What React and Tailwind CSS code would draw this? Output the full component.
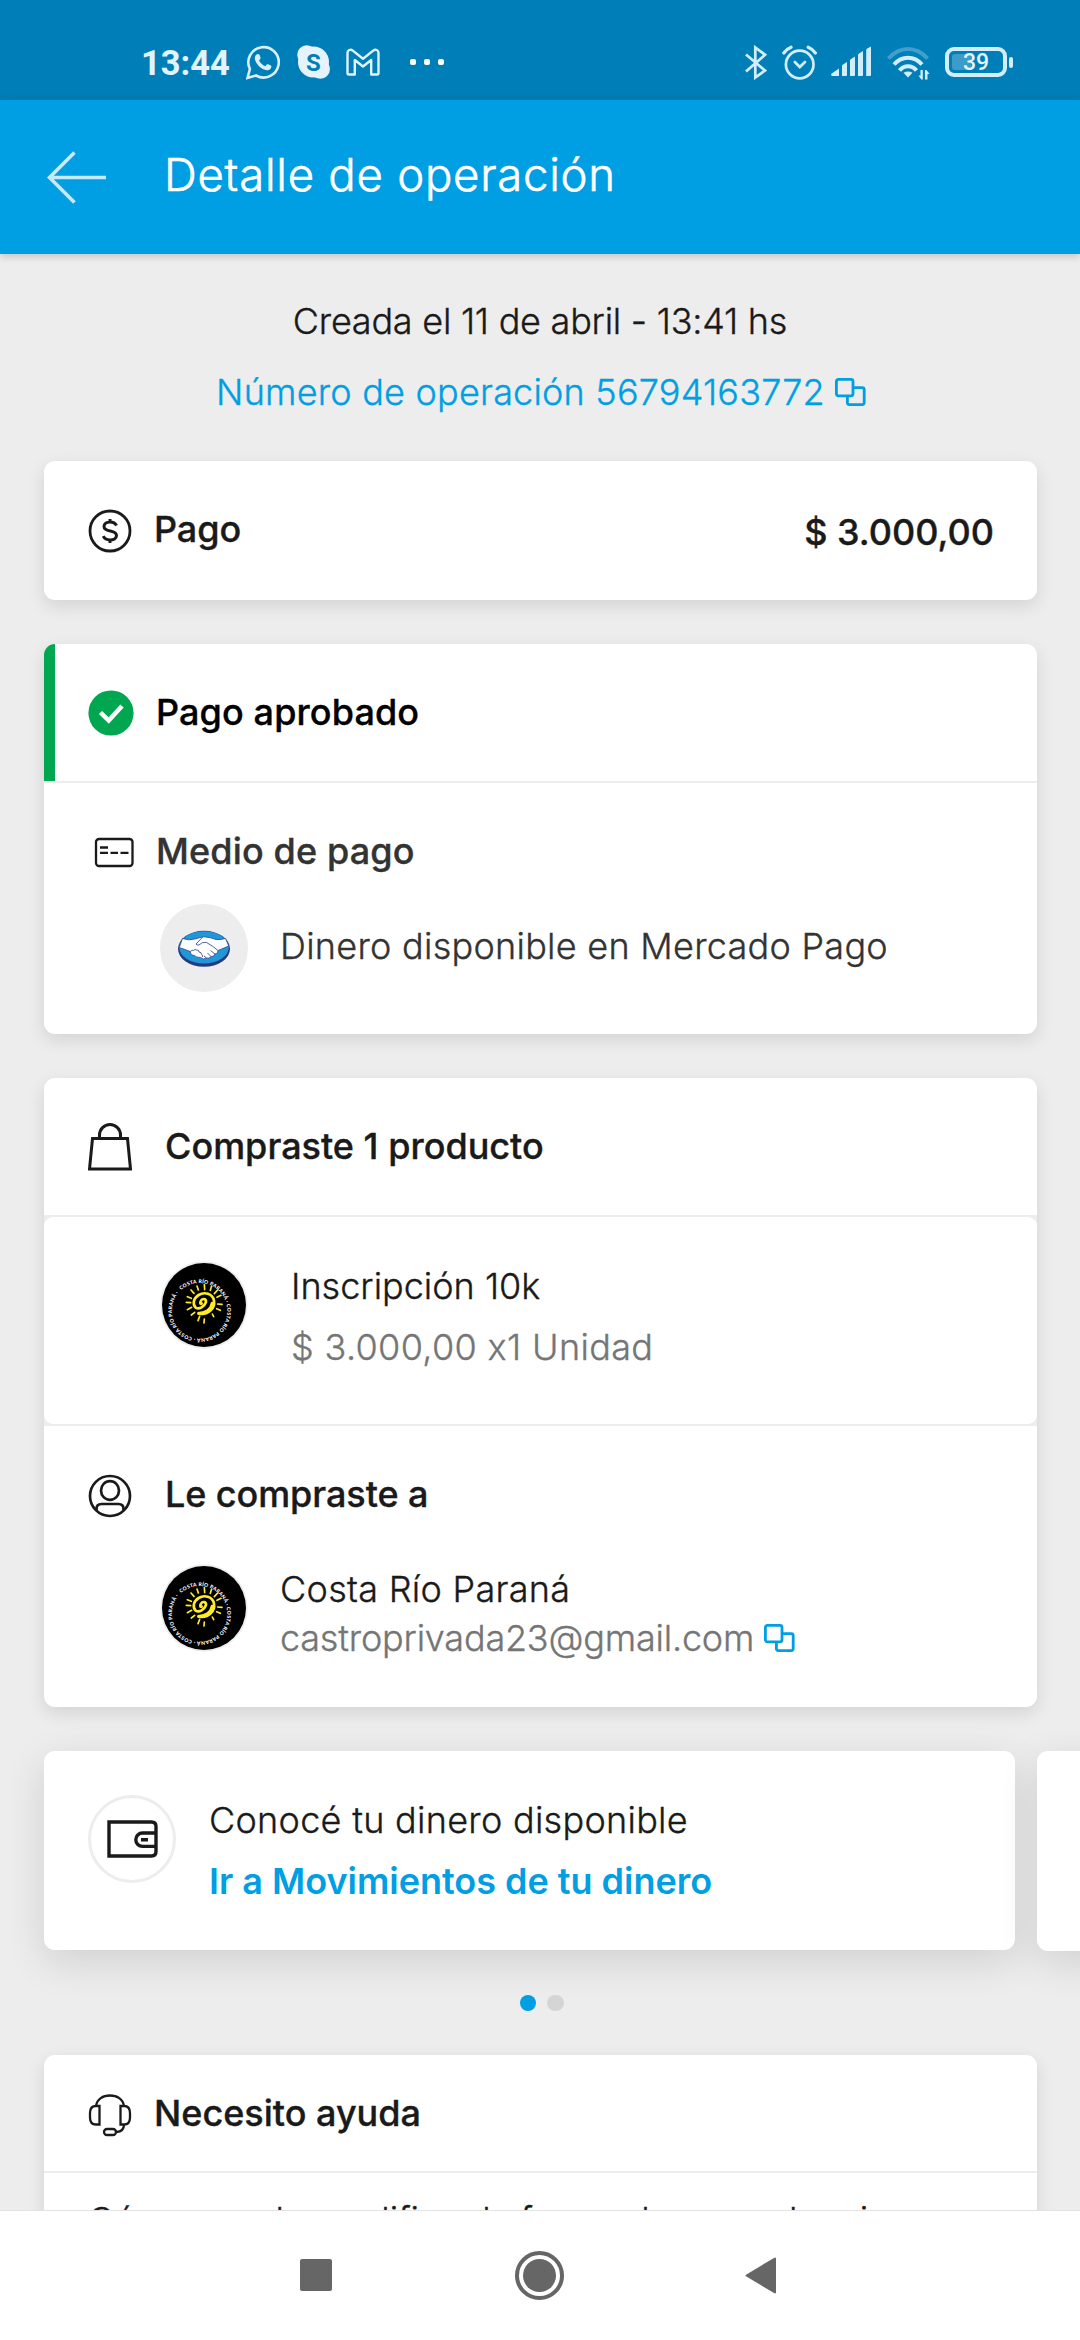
import React from "react";

const CARD = "mx-[44px] w-[993px] overflow-hidden rounded-[11px] bg-white";
const SHADOW = "shadow-[0_6px_18px_rgba(0,0,0,0.11)]";

function CopyIcon() {
  return (
    <svg className="h-7 w-[31px] shrink-0" viewBox="0 0 31 28" fill="none" stroke="#009ee3" strokeWidth="2.8" strokeLinejoin="round">
      <rect x="1.4" y="1.4" width="16.6" height="16.4" rx="2" />
      <path d="M18 9.600h9.200a2 2 0 0 1 2 2v13a2 2 0 0 1-2 2H14.400a2 2 0 0 1-2-2V17.800" />
    </svg>
  );
}

function StatusIcons() {
  const c = "#d3eefb";
  return (
    <div className="flex items-start pr-[67px] pt-[45px]">
      <svg className="h-[35px] w-[22px]" viewBox="0 0 22 35" fill="none" stroke={c} strokeWidth="2.7">
        <path d="M1 9.500L20 25.500 10.300 32.500V2.500L20 9.800 1 26.500" />
      </svg>
      <svg className="ml-[15px] h-[35px] w-[35px]" viewBox="0 0 35 35" fill="none" stroke={c} strokeWidth="2.700" strokeLinecap="round">
        <circle cx="17.700" cy="19.500" r="13.800" />
        <path d="M12.800 17l5 5 5.200-5" />
        <path d="M1.800 8Q4.500 4 9 2.200M33.400 8Q30.700 4 26.200 2.200" strokeWidth="3.200" />
      </svg>
      <svg className="ml-[14px] h-[35px] w-[41px]" viewBox="0 0 41 35" fill={c}>
        <path d="M0 29l8-5.500V31H1.500Q0 31 0 29zM11 31V21q0-1 1-1.500l4-2.500v13q0 1-1 1zM19 31V15.500q0-1 1-1.500l4-2.500V30q0 1-1 1zM27 31V10q0-1 1-1.500L32 6v24q0 1-1 1zM35.200 31V5q0-1 1-1.500L40 1.500V30q0 1-1 1z" />
      </svg>
      <svg className="ml-[15px] h-[36px] w-[43px]" viewBox="0 0 43 36" fill="none" stroke={c} strokeWidth="4">
        <path d="M1.500 13.500Q10 4 21 4t19.500 9.500" opacity=".3" />
        <path d="M7 19.500Q13 12.800 21 12.800t14 6.700" />
        <path d="M12.500 25.500Q16 21.300 21 21.300t8.500 4.200" />
        <path d="M21 32.500l-4.500-4.800Q21 25.500 25.500 27.700z" fill={c} stroke="none" />
        <path d="M33.500 25h2.300v9.500h-1.500L31.500 30.500h2zM38 25h1.500l3 4h-2v5.500H38z" fill={c} stroke="none" />
      </svg>
      <div className="ml-[15px] mt-[2px] flex items-center">
        <div className="flex h-[30px] w-[62px] rounded-[9px] border-4 border-[#d3eefb] p-[3px]">
          <div className="h-4 w-[19px] rounded-[3px] bg-[#3b9cc9]" />
          <span className="-ml-[8px] font-['Roboto'] text-[23px] font-medium leading-[18px] text-[#e3f5fd]">39</span>
        </div>
        <div className="ml-[2px] h-[11px] w-1 rounded-[2px] bg-[#d3eefb]" />
      </div>
    </div>
  );
}

function StatusBar() {
  return (
    <div className="flex h-[100px] justify-between bg-[#007eb7] [-webkit-text-stroke:0px]">
      <div className="flex items-start pl-[141px] pt-[45px]">
        <span className="mt-[-2px] w-[105px] font-['Roboto'] text-[34.5px] font-bold leading-[40px] text-[#e0f4fd]">13:44</span>
        <svg className="h-[35px] w-[34px]" viewBox="0 0 34 35" fill="none" stroke="#d9f0fb" strokeWidth="2.600">
          <path d="M1.500 33l2.400-9A15.200 15.200 0 1 1 10 30.500z" />
          <path d="M10.500 9.500c1.300-1 2.600-.7 3 .3l1 2.600c.3.800-.1 1.500-1.500 2.800 1.300 2.700 3.400 4.700 6.300 6 1.200-1.700 1.900-2.300 2.800-1.900l2.700 1.300c.9.500.7 1.800 0 2.800-1.500 2-4 2.100-6.500 1.200C14 23 10.400 19 9 14.700c-.5-2.200 0-4 1.500-5.200z" fill="#d9f0fb" stroke="none" />
        </svg>
        <svg className="ml-[17px] h-[34px] w-[33px]" viewBox="0 0 33 34" fill="#e5f4fc">
          <circle cx="16.500" cy="17" r="15.500" />
          <circle cx="9.800" cy="9.800" r="9.600" />
          <circle cx="23.300" cy="24.200" r="9.600" />
          <text x="16.500" y="25.500" textAnchor="middle" fill="#007eb7" className="font-['Roboto'] text-[24px] font-bold">S</text>
        </svg>
        <svg className="ml-[16px] mt-[3px] h-[28px] w-[34px]" viewBox="0 0 34 28" fill="none" stroke="#e0f4fd" strokeWidth="2.400" strokeLinejoin="round">
          <path d="M1.500 5C1.500 2 4.500.8 6.800 2.600L17 10.800 27.200 2.600C29.500.8 32.500 2 32.500 5V25Q32.500 26.500 31 26.500H25.200V12L17 18.500 8.800 12V26.500H3Q1.500 26.500 1.500 25z" />
        </svg>
        <div className="ml-[30px] mt-[14px] flex gap-2">
          <span className="h-[6px] w-[6px] rounded-[2px] bg-white" />
          <span className="h-[6px] w-[6px] rounded-[2px] bg-white" />
          <span className="h-[6px] w-[6px] rounded-[2px] bg-white" />
        </div>
      </div>
      <StatusIcons />
    </div>
  );
}

function SunLogo({ id }) {
  const rays = "M163 104L164 119M185 108L181 121M203 120L193 131M213 136L201 142M216 163L203 162M211 181L200 176M191 200L187 192M162 219L163 207M144 212L149 199M124 195L134 187M112 179L125 172M109 157L122 158M112 140L124 145M123 120L132 130M141 108L145 120";
  return (
    <svg className="h-[88px] w-[88px] shrink-0 [-webkit-text-stroke:0px]" viewBox="30 33 264 264">
      <circle cx="162" cy="165" r="131" fill="#ededed" />
      <circle cx="162" cy="165" r="126" fill="#000" />
      <path id={id} d="M90.100 123.500A83 83 0 1 1 90 123.600" fill="none" />
      <text fill="#fff" className="font-['Lato'] text-[15px] font-black">
        <textPath href={"#" + id} textLength="514" lengthAdjust="spacing">&#160;COSTA RÍO PARANÁ · COSTA RÍO PARANÁ · COSTA RÍO PARANÁ ·</textPath>
      </text>
      <path d={rays} stroke="#ffec27" strokeWidth="5" strokeLinecap="round" fill="none" />
      <path d="M148 191C176 196 196 173 192 152C188 129 162 125 146 135C130 145 127 163 137 173C148 180 163 170 168 156C169 146 158 144 153 152C149 159 151 163 155 160" stroke="#ffec27" strokeWidth="8" strokeLinecap="round" fill="none" />
      <path d="M146 190C165 191 184 180 187 160" stroke="#ffec27" strokeWidth="10" strokeLinecap="round" fill="none" />
    </svg>
  );
}

function Handshake() {
  return (
    <svg className="h-[37px] w-[52px]" viewBox="0 0 52 37">
      <ellipse cx="26" cy="18.800" rx="26" ry="18" fill="#273a80" />
      <ellipse cx="26" cy="17.300" rx="24.800" ry="16.100" fill="#1f97d8" />
      <path d="M4.500 8.500Q11 11 18 8.800 22 7.500 26 6.800 33 7.500 38 9.500 43 10 47.500 8.500L50.700 16 40 20.500Q40 24 37 24 36 27 33 26.500 31 29 28.500 28 25 30 22.500 27.500 18 27.500 16.500 25.500 12 25 12.500 21.500L1.300 17.500z" fill="#fff" stroke="#273a80" strokeWidth=".7" />
      <path d="M12.500 21.500q1.500-2 3-1 1.500-2 3-.500 2.500-.5 2.500 2 2.500 0 2.500 2.500 2 .5 1 2.500M40 20.500Q35 16 28.500 12.500 24 11.500 21 15 18.500 15.500 18 14L24.500 7.300M37 24l-4.500-3.500M33 26.500l-3.500-3.500M28.500 28l-2.500-2" fill="none" stroke="#273a80" strokeWidth=".8" />
    </svg>
  );
}

function SystemNav() {
  return (
    <div className="flex h-[130px] items-start border-t border-[#e3e3e3] bg-white pl-[300px]">
      <div className="mt-[48px] h-8 w-8 rounded-[2px] bg-[#666]" />
      <div className="ml-[183px] mt-[40px] flex h-[49px] w-[49px] items-center justify-center rounded-full border-4 border-[#666]">
        <div className="h-[33px] w-[33px] rounded-full bg-[#666]" />
      </div>
      <svg className="ml-[181px] mt-[46px] h-[37px] w-[32px]" viewBox="0 0 32 37" fill="#666" stroke="#666" strokeWidth="2" strokeLinejoin="round">
        <path d="M1.500 18.500L30 1.500v34z" />
      </svg>
    </div>
  );
}

export default function App() {
  return (
    <div className="flex h-[2340px] w-[1080px] flex-col overflow-hidden bg-[#ededed] font-['Inter',sans-serif] text-[36px] font-light leading-[40px] text-[#1a1a1a] [-webkit-text-stroke:0.35px] [font-feature-settings:'calt'_0]">
      <StatusBar />
      <header className="relative z-10 flex h-[154px] shrink-0 items-center bg-[#009ee3] pl-[47px] shadow-[0_2px_8px_rgba(0,0,0,0.2)]">
        <svg className="h-[53px] w-[60px]" viewBox="0 0 60 53" fill="none" stroke="#c4ebfc" strokeWidth="3.600">
          <path d="M27.500 1.500L2.500 26.500l25 25M2.500 26.500H59" />
        </svg>
        <h1 className="mb-[5px] ml-[57px] text-[45.5px] leading-[54px] tracking-[0.75px] text-white [-webkit-text-stroke:0.6px]">Detalle de operación</h1>
      </header>

      <main className="flex min-h-0 flex-1 flex-col overflow-hidden">
        <div className="flex flex-col items-center pt-[47px]">
          <p className="tracking-[-0.24px]">Creada el 11 de abril - 13:41 hs</p>
          <div className="mt-[31px] flex items-center gap-[10px] pl-[2px] text-[#009ee3]">
            <span className="tracking-[0.21px]">Número de operación 56794163772</span>
            <CopyIcon />
          </div>
        </div>

        <section className={`${CARD} ${SHADOW} mt-[49px] flex h-[139px] shrink-0 items-center justify-between pl-[44px] pr-[43px] font-medium`}>
          <div className="flex items-center">
            <svg className="h-[44px] w-[44px]" viewBox="0 0 44 44" fill="none" stroke="#1a1a1a" strokeWidth="2.800">
              <circle cx="22" cy="22" r="20" />
              <path d="M28.500 16.500C27 13.500 24.500 13 22 13c-3.500 0-6 1.800-6 4.500 0 6.500 12.500 2.500 12.500 9C28.500 29.500 25.500 31 22 31c-3 0-5.500-1.200-6.800-3.800M22 10v3.500M22 30.500V34" strokeWidth="3" />
            </svg>
            <span className="mb-1 ml-[22px] tracking-[-0.1px]">Pago</span>
          </div>
          <span className="mt-[2px]">$ 3.000,00</span>
        </section>

        <section className={`${CARD} ${SHADOW} mt-[44px] h-[390px] shrink-0 font-medium`}>
          <div className="flex h-[137px] items-center border-l-[11px] border-[#00a650] pl-[33px] text-black">
            <svg className="h-[46px] w-[46px]" viewBox="0 0 46 46">
              <circle cx="23" cy="23" r="22.600" fill="#00a650" />
              <path d="M12.500 22.500l8.200 8L34 16" fill="none" stroke="#fff" strokeWidth="4.500" />
            </svg>
            <span className="mb-[1px] ml-[22px] tracking-[0.11px]">Pago aprobado</span>
          </div>
          <div className="border-t-2 border-[#ededed] pt-[47px] text-[#333]">
            <div className="flex items-center pl-[50px]">
              <svg className="mt-[3px] h-[31px] w-[41px]" viewBox="0 0 41 31" fill="none" stroke="#1a1a1a" strokeWidth="2.300">
                <rect x="2" y="2" width="36.500" height="27" rx="3" />
                <path d="M6 10.500h8M6 15.800h8M16.500 15.800h7.500M26.500 15.800h8" />
              </svg>
              <span className="ml-[21px] mt-[1px] tracking-[0.15px]">Medio de pago</span>
            </div>
            <div className="mt-[33px] flex items-center pl-[116px] font-light">
              <div className="flex h-[88px] w-[88px] items-center justify-center rounded-full bg-[#ededed]">
                <Handshake />
              </div>
              <span className="mb-1 ml-[32px] tracking-[0.27px]">Dinero disponible en Mercado Pago</span>
            </div>
          </div>
        </section>

        <section className={`${CARD} ${SHADOW} mt-[44px] h-[629px] shrink-0`}>
          <div className="flex h-[137px] items-center pl-[44px] font-medium">
            <svg className="h-[48px] w-[44px]" viewBox="0 0 44 48" fill="none" stroke="#1a1a1a" strokeWidth="3">
              <path d="M4.500 15.500h35l3 30.500H1.500zM11.500 15.500V12a10.500 10.500 0 0 1 21 0v3.500" />
            </svg>
            <span className="mb-[1px] ml-[33px]">Compraste 1 producto</span>
          </div>
          <div className="bg-[#ededed] py-[2px]">
            <div className="flex h-[207px] rounded-[9px] bg-white pl-[116px] pt-[44px]">
              <SunLogo id="ring-product" />
              <div className="ml-[43px] mt-[5px] flex flex-col gap-[21px]">
                <span>Inscripción 10k</span>
                <span className="tracking-[0.35px] text-[#757575]">$ 3.000,00 x1 Unidad</span>
              </div>
            </div>
          </div>
          <div className="flex items-center pl-[44px] pt-[44px] font-medium">
            <svg className="mt-[4px] h-[44px] w-[44px]" viewBox="0 0 44 44" fill="none" stroke="#1a1a1a" strokeWidth="2.700">
              <circle cx="22" cy="22" r="20" />
              <ellipse cx="22" cy="16.500" rx="9" ry="9.300" />
              <path d="M8.500 36.500V35q0-5 5-5h17q5 0 5 5v1.500" />
            </svg>
            <span className="ml-[33px] tracking-[-0.08px]">Le compraste a</span>
          </div>
          <div className="mt-[46px] flex pl-[116px]">
            <SunLogo id="ring-seller" />
            <div className="ml-[32px] mt-[5px] flex flex-col gap-[9px]">
              <span className="tracking-[0.29px]">Costa Río Paraná</span>
              <div className="flex items-center gap-[10px] text-[#757575]">
                <span className="tracking-[-0.2px]">castroprivada23@gmail.com</span>
                <CopyIcon />
              </div>
            </div>
          </div>
        </section>

        <div className="mt-[44px] flex h-[200px] shrink-0 gap-[22px] pl-[44px]">
          <section className="flex h-[199px] w-[971px] shrink-0 rounded-[11px] bg-white pl-[44px] pt-[44px] shadow-[0_12px_40px_rgba(0,0,0,0.12)]">
            <div className="flex h-[88px] w-[88px] items-center justify-center rounded-full border-[3px] border-[#ededed]">
              <svg className="h-[38px] w-[51px]" viewBox="0 0 51 38" fill="none" stroke="#1a1a1a" strokeWidth="3.400">
                <path d="M2 2h42.500q4.500 0 4.500 4.500v25q0 4.500-4.500 4.500H2zM49 13H35.500a6.600 6.600 0 0 0 0 13.400H49M34 19.700h7" />
              </svg>
            </div>
            <div className="ml-[33px] mt-[5px] flex flex-col gap-[21px]">
              <span className="tracking-[0.28px]">Conocé tu dinero disponible</span>
              <span className="font-semibold tracking-[-0.02px] text-[#009ee3] [-webkit-text-stroke:0px]">Ir a Movimientos de tu dinero</span>
            </div>
          </section>
          <section className="h-[200px] w-[971px] shrink-0 rounded-[11px] bg-white shadow-[0_12px_40px_rgba(0,0,0,0.12)]" />
        </div>

        <div className="mt-[44px] flex justify-center gap-[11px] pl-[3px]">
          <span className="h-4 w-4 rounded-full bg-[#009ee3]" />
          <span className="h-4 w-[17px] rounded-full bg-[#d5d5d5]" />
        </div>

        <section className={`${CARD} ${SHADOW} mt-[44px] h-[400px] shrink-0`}>
          <div className="flex h-[116px] items-center pl-[44px] font-medium">
            <svg className="mt-[4px] h-[44px] w-[44px]" viewBox="0 0 44 44" fill="none" stroke="#1a1a1a" strokeWidth="2.300">
              <path d="M8 13C9 6 15 2.500 22 2.500S35 6 36 13" />
              <path d="M11.500 13H8q-6 0-6 7v4.500q0 7 6 7h3.500zM32.500 13H36q6 0 6 7v4.500q0 7-6 7h-3.500z" />
              <path d="M36 31.500q0 7-7.500 7.500" />
              <rect x="16" y="36" width="12" height="6" rx="3" />
            </svg>
            <span className="mb-[1px] ml-[22px]">Necesito ayuda</span>
          </div>
          <div className="whitespace-nowrap border-t-2 border-[#ededed] pl-[44px] pt-[27px]">Cómo puedo modificar la forma de pago de mi compra</div>
        </section>
      </main>

      <SystemNav />
    </div>
  );
}
